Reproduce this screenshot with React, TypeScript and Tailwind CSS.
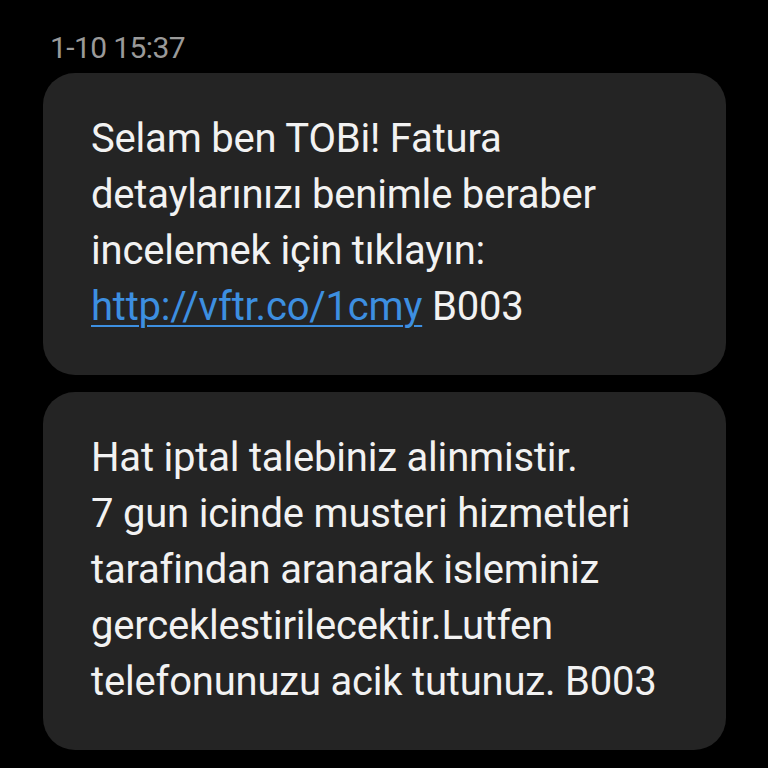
const messages = [
  {
    id: 1,
    lines: [
      'Selam ben TOBi! Fatura',
      'detaylarınızı benimle beraber',
      'incelemek için tıklayın:',
    ],
    link: 'http://vftr.co/1cmy',
    tail: ' B003',
  },
  {
    id: 2,
    lines: [
      'Hat iptal talebiniz alinmistir.',
      '7 gun icinde musteri hizmetleri',
      'tarafindan aranarak isleminiz',
      'gerceklestirilecektir.Lutfen',
      'telefonunuzu acik tutunuz. B003',
    ],
  },
];

export default function App() {
  return (
    <div className="w-[768px] h-[768px] overflow-hidden bg-black font-['Roboto',sans-serif]">
      {/* Tarih */}
      <div className="pl-[50px] pt-[31px] text-[30px] leading-[34px] tracking-[-0.6px] text-[#9a9a9a]">1-10 15:37</div>

      <div className="mt-[8px] flex flex-col gap-[17px] pl-[43px] pr-[42px]">
        {messages.map((m) => (
          <div
            key={m.id}
            className="rounded-[32px] bg-[#242424] pl-[48px] pr-[20px] pt-[38px] pb-[40px] text-[40px] leading-[56px] text-[#f2f2f2] tracking-[-0.2px]"
          >
            {m.lines.map((l) => (
              <div key={l}>{l}</div>
            ))}
            {m.link && (
              <div>
                <span className="text-[#3d8fe0] underline decoration-2 underline-offset-[5px]">{m.link}</span>
                {m.tail}
              </div>
            )}
          </div>
        ))}
      </div>
    </div>
  );
}
